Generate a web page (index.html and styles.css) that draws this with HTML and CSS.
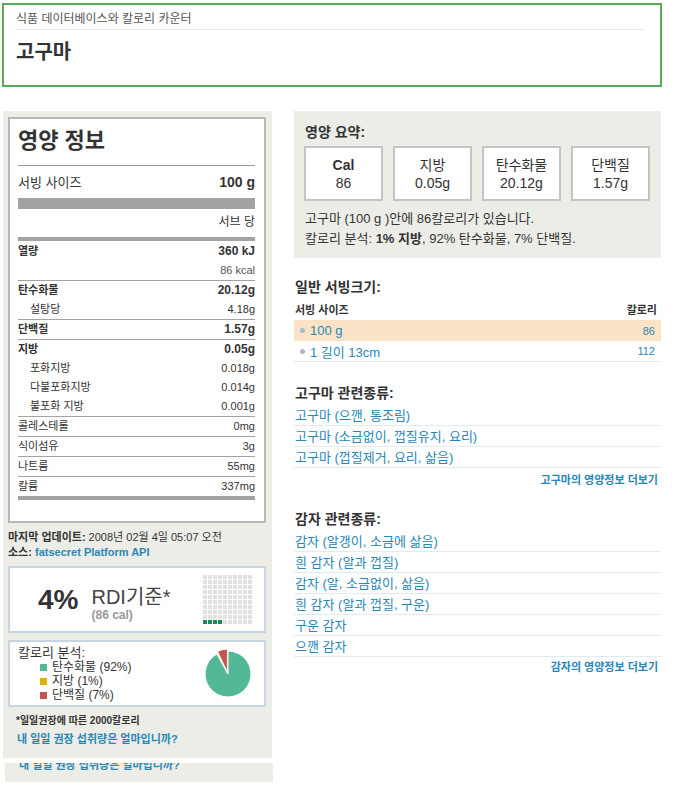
FILE: index.html
```html
<!DOCTYPE html>
<html lang="ko">
<head>
<meta charset="utf-8">
<title>고구마 - 영양 정보</title>
<link rel="stylesheet" href="styles.css">
</head>
<body>
<div class="header">
  <div class="crumb">식품 데이터베이스와 칼로리 카운터</div>
  <h1 class="title">고구마</h1>
</div>
<div class="main">
  <div class="left">
    <div class="panel">
      <div class="nf">
        <div class="nf-title">영양 정보</div>
        <div class="nf-serving"><span>서빙 사이즈</span><b>100 g</b></div>
        <div class="nf-bar"></div>
        <div class="nf-per">서브 당</div>
        <div class="nf-thick"></div>
        <div class="nf-group first">
          <div class="nf-row b"><span>열량</span><span class="v">360 kJ</span></div>
          <div class="nf-row"><span></span><span class="muted">86 kcal</span></div>
        </div>
        <div class="nf-group">
          <div class="nf-row b"><span>탄수화물</span><span class="v">20.12g</span></div>
          <div class="nf-row sub"><span>설탕당</span><span>4.18g</span></div>
        </div>
        <div class="nf-group">
          <div class="nf-row b"><span>단백질</span><span class="v">1.57g</span></div>
        </div>
        <div class="nf-group">
          <div class="nf-row b"><span>지방</span><span class="v">0.05g</span></div>
          <div class="nf-row sub"><span>포화지방</span><span>0.018g</span></div>
          <div class="nf-row sub"><span>다불포화지방</span><span>0.014g</span></div>
          <div class="nf-row sub"><span>불포화 지방</span><span>0.001g</span></div>
        </div>
        <div class="nf-group">
          <div class="nf-row"><span>콜레스테롤</span><span>0mg</span></div>
        </div>
        <div class="nf-group">
          <div class="nf-row"><span>식이섬유</span><span>3g</span></div>
        </div>
        <div class="nf-group">
          <div class="nf-row"><span>나트륨</span><span>55mg</span></div>
        </div>
        <div class="nf-group">
          <div class="nf-row"><span>칼륨</span><span>337mg</span></div>
        </div>
        <div class="nf-end"></div>
      </div>
      <div class="meta">
        <div><b>마지막 업데이트:</b> 2008년 02월 4일 05:07 오전</div>
        <div><b>소스:</b> <a class="src" href="#">fatsecret Platform API</a></div>
      </div>
      <div class="rdi">
        <div class="pct">4%</div>
        <div class="rdi-text">
          <div class="rdi-big">RDI기준*</div>
          <div class="rdi-cal">(86 cal)</div>
        </div>
        <svg class="rdi-grid" width="50" height="50" viewBox="0 0 50 50">
          <defs>
            <pattern id="sq" width="5" height="5" patternUnits="userSpaceOnUse">
              <rect x="0" y="0" width="4" height="4" fill="#e1e1e1"/>
            </pattern>
          </defs>
          <rect x="0" y="0" width="50" height="50" fill="url(#sq)"/>
          <rect x="0" y="45" width="4" height="4" fill="#168a5c"/>
          <rect x="5" y="45" width="4" height="4" fill="#168a5c"/>
          <rect x="10" y="45" width="4" height="4" fill="#168a5c"/>
          <rect x="15" y="45" width="4" height="4" fill="#168a5c"/>
        </svg>
      </div>
      <div class="cb">
        <div class="cb-left">
          <div class="cb-title">칼로리 분석:</div>
          <ul class="legend">
            <li><i class="sw carb"></i>탄수화물 (92%)</li>
            <li><i class="sw fat"></i>지방 (1%)</li>
            <li><i class="sw prot"></i>단백질 (7%)</li>
          </ul>
        </div>
        <svg class="pie" width="50" height="50" viewBox="0 0 50 50">
          <path d="M25,25 L25,2 A23,23 0 1,1 13.92,4.85 Z" fill="#52b897" stroke="#fff" stroke-width="1"/>
          <path d="M25,25 L13.92,4.85 A23,23 0 0,1 15.21,4.19 Z" fill="#e0b100" stroke="#fff" stroke-width="1"/>
          <path d="M25,25 L15.21,4.19 A23,23 0 0,1 25,2 Z" fill="#c0574f" stroke="#fff" stroke-width="0.8" transform="translate(-0.6,-1.8)"/>
        </svg>
      </div>
      <div class="foot">*일일권장에 따른 2000칼로리</div>
      <a class="foot-link" href="#">내 일일 권장 섭취량은 얼마입니까?</a>
    </div>
    <div class="strip"><span>내 일일 권장 섭취량은 얼마입니까?</span></div>
  </div>

  <div class="right">
    <div class="summary">
      <h2 class="sum-title">영양 요약:</h2>
      <div class="boxes">
        <div class="box"><b>Cal</b><span>86</span></div>
        <div class="box"><span>지방</span><span>0.05g</span></div>
        <div class="box"><span>탄수화물</span><span>20.12g</span></div>
        <div class="box"><span>단백질</span><span>1.57g</span></div>
      </div>
      <div class="sum-text">
        <div>고구마 (100 g )안에 86칼로리가 있습니다.</div>
        <div>칼로리 분석: <b>1% 지방</b>, 92% 탄수화물, 7% 단백질.</div>
      </div>
    </div>

    <h3 class="sec-title">일반 서빙크기:</h3>
    <div class="srv-head"><span>서빙 사이즈</span><span>칼로리</span></div>
    <div class="srv">
      <div class="srv-row hl"><span class="srv-name"><i class="dot"></i>100 g</span><span class="srv-cal">86</span></div>
      <div class="srv-row last"><span class="srv-name"><i class="dot"></i>1 길이 13cm</span><span class="srv-cal">112</span></div>
    </div>

    <h3 class="sec-title rel">고구마 관련종류:</h3>
    <div class="links">
      <a href="#">고구마 (으깬, 통조림)</a>
      <a href="#">고구마 (소금없이, 껍질유지, 요리)</a>
      <a href="#">고구마 (껍질제거, 요리, 삶음)</a>
    </div>
    <div class="more"><a href="#">고구마의 영양정보 더보기</a></div>

    <h3 class="sec-title second">감자 관련종류:</h3>
    <div class="links">
      <a href="#">감자 (알갱이, 소금에 삶음)</a>
      <a href="#">흰 감자 (알과 껍질)</a>
      <a href="#">감자 (알, 소금없이, 삶음)</a>
      <a href="#">흰 감자 (알과 껍질, 구운)</a>
      <a href="#">구운 감자</a>
      <a href="#">으깬 감자</a>
    </div>
    <div class="more last"><a href="#">감자의 영양정보 더보기</a></div>
  </div>
</div>
</body>
</html>
```

FILE: styles.css
```css
body {
  margin: 0;
  font-family: "Liberation Sans", "Noto Sans CJK KR", sans-serif;
  color: #333;
  background: #fff;
}

a {
  color: #2787b9;
  text-decoration: none;
}

/* Header */
.header {
  box-sizing: border-box;
  width: 660px;
  height: 84px;
  margin: 3px 0 0 2px;
  border: 2px solid #55ad5a;
  padding: 0 15px 0 11px;
}
.crumb {
  font-size: 12px;
  line-height: 16px;
  padding: 6px 0 2px 1px;
  color: #555;
  border-bottom: 1px solid #e4e9ed;
}
.title {
  margin: 10px 0 0 1px;
  font-size: 20px;
  line-height: 24px;
  font-weight: bold;
  color: #333;
}

/* Layout */
.main {
  display: flex;
  align-items: flex-start;
  margin-top: 24px;
}
.left {
  margin-left: 3px;
  width: 269px;
}
.panel {
  background: #edede8;
  padding: 6px 6px 12px 5px;
}

/* Nutrition facts */
.nf {
  background: #fff;
  border: 2px solid #b8b8b8;
  padding: 9px 9px 21px 8px;
}
.nf-title {
  font-size: 22px;
  line-height: 26px;
  font-weight: bold;
  padding-bottom: 11px;
  border-bottom: 1px solid #999;
}
.nf-serving {
  display: flex;
  justify-content: space-between;
  align-items: baseline;
  font-size: 13px;
  line-height: 18px;
  height: 18px;
  margin-top: 7px;
}
.nf-serving b {
  font-size: 14px;
}
.nf-bar {
  height: 11px;
  background: #a3a3a3;
  margin-top: 7px;
}
.nf-per {
  text-align: right;
  font-size: 12px;
  line-height: 18px;
  height: 18px;
  margin-top: 4px;
}
.nf-thick {
  height: 4px;
  background: #a3a3a3;
  margin-top: 6px;
}
.nf-group {
  border-top: 1px solid #a3a3a3;
}
.nf-group.first {
  border-top: 0;
  padding-top: 1px;
}
.nf-row {
  display: flex;
  justify-content: space-between;
  align-items: baseline;
  font-size: 11px;
  line-height: 19px;
  height: 19px;
}
.nf-row.b {
  font-weight: bold;
}
.nf-row .v {
  font-size: 12px;
}
.nf-row.sub {
  padding-left: 12px;
}
.muted {
  color: #555;
}
.nf-end {
  height: 4px;
  background: #a3a3a3;
}

/* Meta */
.meta {
  font-size: 11px;
  line-height: 15px;
  margin-top: 7px;
}
.meta div {
  height: 15px;
}
.src {
  font-weight: bold;
}

/* RDI box */
.rdi {
  box-sizing: border-box;
  margin-top: 6px;
  height: 67px;
  border: 2px solid #c7d5e3;
  background: #fff;
  display: flex;
  align-items: center;
  padding: 0 11px 0 28px;
}
.pct {
  font-size: 28px;
  line-height: 32px;
  font-weight: bold;
  margin-right: 13px;
}
.rdi-text {
  margin-top: 8px;
}
.rdi-big {
  font-size: 20px;
  line-height: 22px;
  color: #444;
}
.rdi-cal {
  font-size: 12px;
  line-height: 14px;
  font-weight: bold;
  color: #999;
}
.rdi-grid {
  margin-left: auto;
  display: block;
}

/* Calorie breakdown */
.cb {
  box-sizing: border-box;
  margin-top: 7px;
  height: 67px;
  border: 2px solid #c7d5e3;
  background: #fff;
  display: flex;
  align-items: center;
  padding: 0 11px 0 8px;
}
.cb-left {
  align-self: flex-start;
  padding-top: 3px;
}
.cb-title {
  font-size: 13px;
  line-height: 15px;
}
.legend {
  list-style: none;
  margin: 0;
  padding: 0 0 0 22px;
}
.legend li {
  display: flex;
  align-items: center;
  font-size: 12px;
  line-height: 14px;
  height: 14px;
}
.sw {
  display: inline-block;
  width: 7px;
  height: 7px;
  margin-right: 5px;
}
.sw.carb { background: #52b897; }
.sw.fat { background: #e0b100; }
.sw.prot { background: #c0574f; }
.pie {
  margin-left: auto;
  display: block;
}

/* Footnote */
.foot {
  font-size: 10px;
  font-weight: bold;
  line-height: 14px;
  margin: 7px 0 0 8px;
}
.foot-link {
  display: block;
  font-size: 11px;
  font-weight: bold;
  line-height: 14px;
  margin: 4px 0 0 9px;
}
.strip {
  margin: 5px 0 0 2px;
  width: 268px;
  height: 19px;
  background: #edede8;
  overflow: hidden;
}
.strip span {
  display: block;
  margin-top: -5px;
  padding-left: 14px;
  font-size: 11px;
  font-weight: bold;
  line-height: 14px;
  color: #2787b9;
}

/* Right column */
.right {
  margin-left: 22px;
  width: 367px;
}
.summary {
  background: #edede8;
  padding: 13px 10px 9px 10px;
}
.sum-title {
  margin: 0 0 0 1px;
  font-size: 14px;
  line-height: 16px;
  font-weight: bold;
}
.boxes {
  display: grid;
  grid-template-columns: repeat(4, 79px);
  gap: 10px;
  margin-top: 6px;
}
.box {
  box-sizing: border-box;
  height: 55px;
  border: 2px solid #c4c4c4;
  background: #fff;
  display: flex;
  flex-direction: column;
  justify-content: center;
  align-items: center;
  font-size: 14px;
  line-height: 18px;
}
.box span, .box b {
  height: 18px;
}
.sum-text {
  margin-top: 8px;
  padding-left: 1px;
  font-size: 13px;
  line-height: 20px;
}
.sum-text div {
  height: 20px;
}

.sec-title {
  margin: 20px 0 0 1px;
  font-size: 14px;
  line-height: 18px;
  height: 18px;
  font-weight: bold;
}
.sec-title.rel {
  margin-top: 22px;
}
.sec-title.second {
  margin-top: 23px;
}
.srv-head {
  display: flex;
  justify-content: space-between;
  font-size: 11px;
  font-weight: bold;
  line-height: 16px;
  height: 16px;
  margin-top: 6px;
  padding: 0 4px 0 1px;
}
.srv {
  margin-top: 2px;
}
.srv-row {
  box-sizing: border-box;
  display: flex;
  justify-content: space-between;
  align-items: center;
  height: 21px;
  padding: 0 6px;
}
.srv-row.hl {
  background: #fbe4c6;
}
.srv-row.last {
  border-bottom: 1px solid #e4eaee;
}
.srv-name {
  display: flex;
  align-items: center;
  font-size: 13px;
  color: #2787b9;
}
.dot {
  display: inline-block;
  width: 5px;
  height: 5px;
  border-radius: 50%;
  background: #a7b8cf;
  margin-right: 5px;
}
.srv-cal {
  font-size: 11px;
  color: #2787b9;
}

.links {
  margin-top: 3px;
}
.links a {
  display: block;
  box-sizing: border-box;
  height: 21px;
  border-bottom: 1px solid #e4ebef;
  font-size: 13px;
  line-height: 22px;
  padding-left: 1px;
}
.more {
  text-align: right;
  font-size: 11px;
  font-weight: bold;
  line-height: 14px;
  height: 14px;
  padding-right: 3px;
  margin-top: 5px;
}
.more.last {
  margin-top: 3px;
}
```
